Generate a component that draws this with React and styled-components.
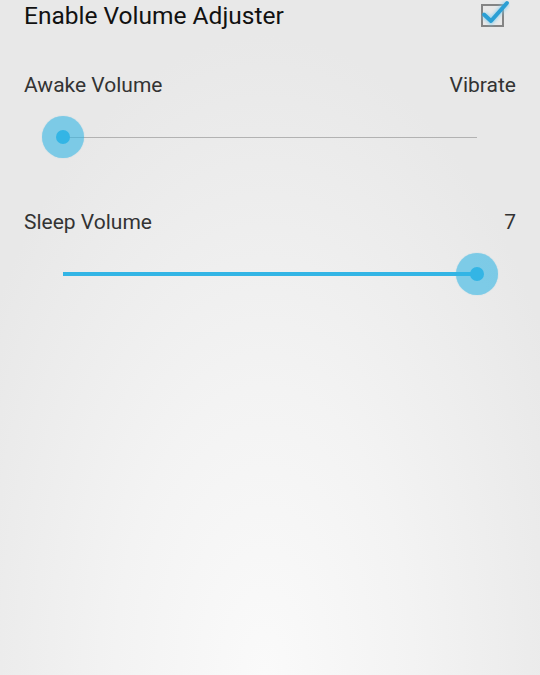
import React from "react";
import styled, { createGlobalStyle } from "styled-components";

const GlobalStyle = createGlobalStyle`
  html, body {
    margin: 0;
    padding: 0;
  }
  body {
    font-family: Roboto, "Noto Sans", sans-serif;
    background: #e8e8e8;
  }
`;

const prefs = [
  { id: "awake", label: "Awake Volume", value: "Vibrate", progress: 0 },
  { id: "sleep", label: "Sleep Volume", value: "7", progress: 1 },
];

const Checkbox = () => (
  <CheckWrap>
    <Box />
    <svg width="30" height="30" viewBox="0 0 30 30">
      <defs>
        <filter id="glow" x="-30%" y="-30%" width="160%" height="160%">
          <feGaussianBlur stdDeviation="1.4" />
        </filter>
      </defs>
      <polyline
        points="4,14.5 11,21 27,3"
        fill="none"
        stroke="#7fcdee"
        strokeWidth="7"
        strokeOpacity="0.6"
        filter="url(#glow)"
      />
      <polyline
        points="4,14.5 11,21 27,3"
        fill="none"
        stroke="#2a9fd4"
        strokeWidth="4"
        strokeLinecap="round"
        strokeLinejoin="round"
      />
    </svg>
  </CheckWrap>
);

const Slider = ({ progress }) => (
  <SliderWrap>
    <Track>
      <Progress style={{ width: `${progress * 100}%` }} />
      <Thumb style={{ left: `${progress * 100}%` }}>
        <Dot />
      </Thumb>
    </Track>
  </SliderWrap>
);

const App = () => {
  return (
    <Page>
      <GlobalStyle />
      <Header>
        <Title>Enable Volume Adjuster</Title>
        <Checkbox />
      </Header>
      {prefs.map((p) => (
        <Pref key={p.id}>
          <LabelRow>
            <span>{p.label}</span>
            <span>{p.value}</span>
          </LabelRow>
          <Slider progress={p.progress} />
        </Pref>
      ))}
    </Page>
  );
};

export default App;

const Page = styled.div`
  min-height: 675px;
  width: 100%;
  background: radial-gradient(
    ellipse 330px 640px at 49% 100%,
    #fafafa 0%,
    #f3f3f3 45%,
    #e8e8e8 100%
  );
  overflow: hidden;
`;
const Header = styled.div`
  display: flex;
  align-items: center;
  justify-content: space-between;
  height: 32px;
  padding: 0 36px 0 24px;
`;
const Title = styled.div`
  font-size: 24.5px;
  line-height: 32px;
  color: #111;
`;
const CheckWrap = styled.div`
  position: relative;
  width: 24px;
  height: 24px;
  margin-top: -2px;
  svg {
    position: absolute;
    left: 0;
    top: -3px;
  }
`;
const Box = styled.div`
  box-sizing: border-box;
  width: 23px;
  height: 23px;
  margin: 1px 0 0 1px;
  border: 2px solid #848484;
`;
const Pref = styled.div`
  padding-top: 41px;
  & + & {
    padding-top: 51px;
  }
`;
const LabelRow = styled.div`
  display: flex;
  justify-content: space-between;
  padding: 0 24px;
  font-size: 21px;
  line-height: 24px;
  color: #333;
`;
const SliderWrap = styled.div`
  margin: 18px 63px 0;
  height: 44px;
  display: flex;
  align-items: center;
`;
const Track = styled.div`
  position: relative;
  width: 100%;
  height: 1px;
  background: #b2b2b2;
`;
const Progress = styled.div`
  position: absolute;
  left: 0;
  top: -1.5px;
  height: 4px;
  background: #33b5e5;
`;
const Thumb = styled.div`
  position: absolute;
  top: 0;
  width: 42px;
  height: 42px;
  margin: -21px 0 0 -21px;
  border-radius: 50%;
  background: rgba(51, 181, 229, 0.6);
  box-shadow: 0 0 1px rgba(51, 181, 229, 0.5);
  display: flex;
  align-items: center;
  justify-content: center;
`;
const Dot = styled.div`
  width: 14px;
  height: 14px;
  border-radius: 50%;
  background: #33b5e5;
`;
